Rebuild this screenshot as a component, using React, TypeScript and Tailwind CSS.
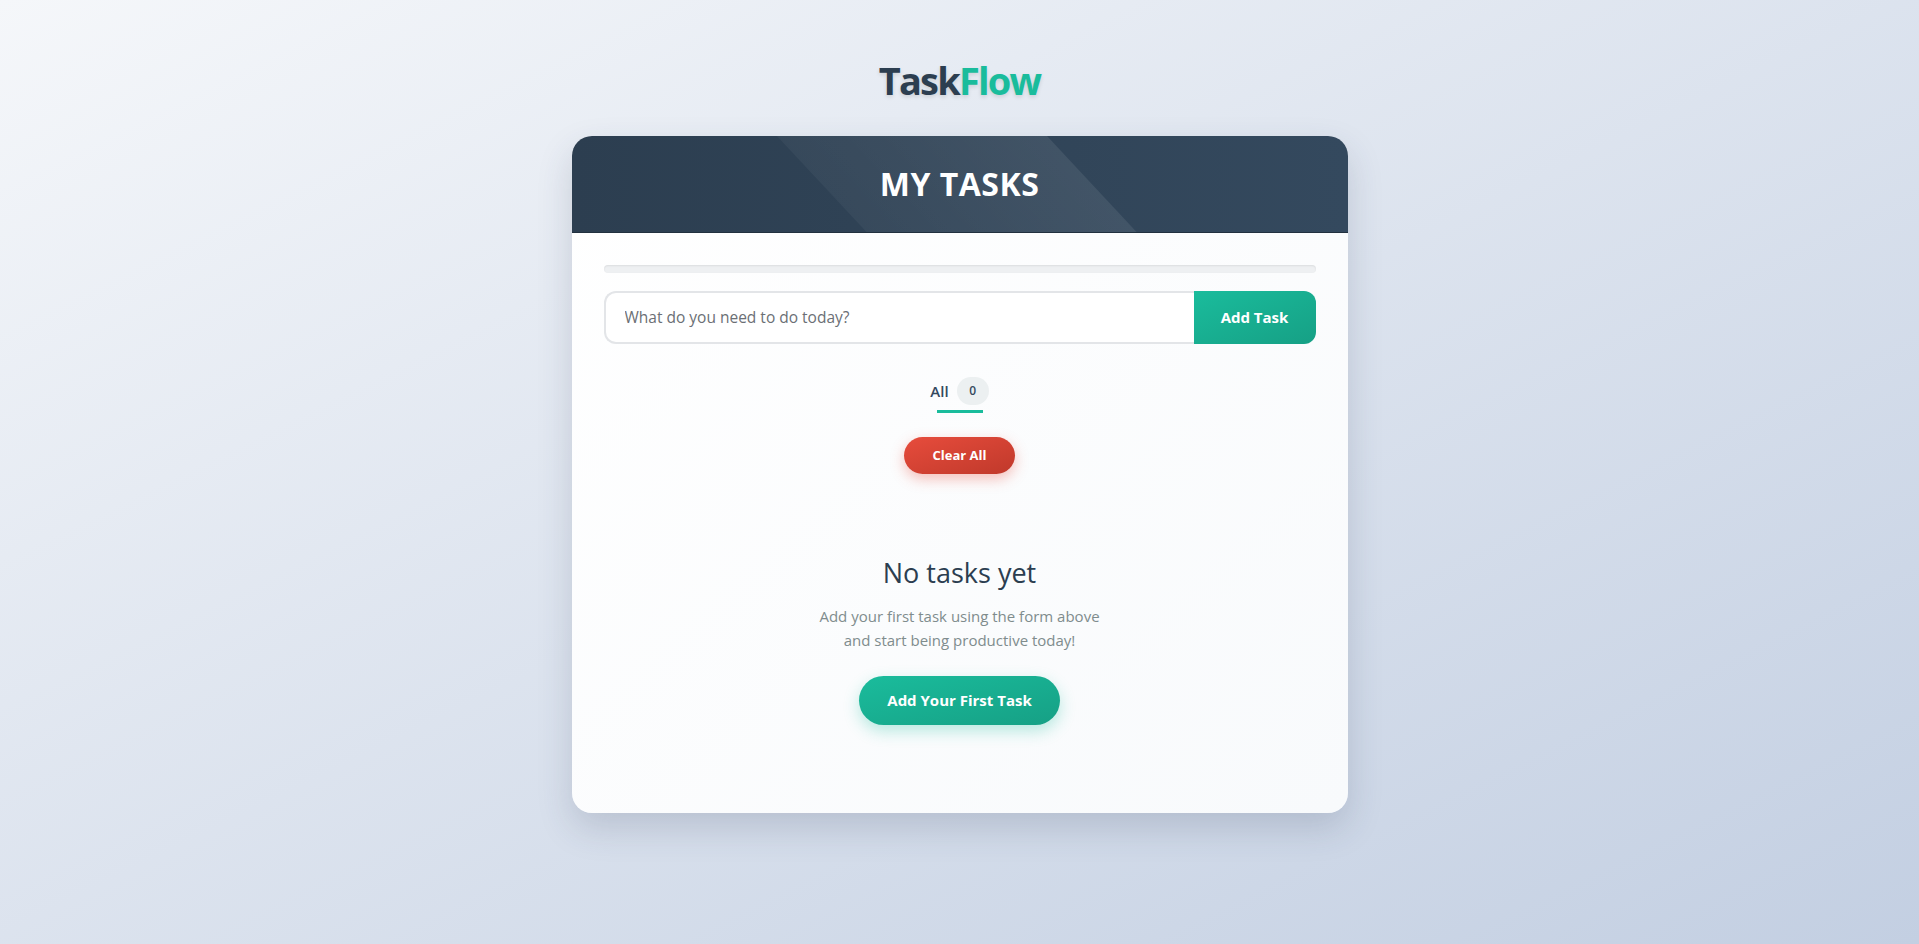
import { useState } from "react";

const font = { fontFamily: '"Open Sans", "Noto Sans", sans-serif' };

function Header() {
  return (
    <div className="relative h-[97px] overflow-hidden border-b border-[#22313f] bg-gradient-to-r from-[#2c3e50] to-[#34495e]">
      {/* diagonal light band */}
      <div className="absolute top-0 left-[205px] h-full w-[270px] skew-x-[43deg] origin-top bg-gradient-to-r from-white/[0.04] to-white/[0.08]" />
      <h2 className="relative flex h-full items-center justify-center text-[32px] font-bold tracking-[0.5px] text-white">
        MY TASKS
      </h2>
    </div>
  );
}

export default function App() {
  const [text, setText] = useState("");
  const [tasks, setTasks] = useState<string[]>([]);

  const add = () => {
    if (!text.trim()) return;
    setTasks([...tasks, text.trim()]);
    setText("");
  };

  return (
    <div
      className="min-h-screen bg-gradient-to-br from-[#f5f7fa] to-[#c3cfe2] pt-[52px] pb-16"
      style={font}
    >
      <h1 className="text-center text-[38px] font-bold leading-[56px] tracking-[-1.8px] text-[#2c3e50] [text-shadow:0_2px_4px_rgba(0,0,0,0.12)]">
        Task<span className="text-[#1abc9c]">Flow</span>
      </h1>

      <div className="mx-auto mt-[28px] w-[776px] overflow-hidden rounded-[20px] bg-gradient-to-br from-white to-[#f8fafc] shadow-[0_15px_35px_rgba(50,60,90,0.18)]">
        <Header />

        <div className="px-8 pt-8 pb-[88px]">
          <div className="h-2 rounded-full bg-[#eef0f2] shadow-[inset_0_1px_2px_rgba(0,0,0,0.08)]" />

          <div className="mt-[18px] flex h-[53px]">
            <input
              value={text}
              onChange={(e) => setText(e.target.value)}
              onKeyDown={(e) => e.key === "Enter" && add()}
              placeholder="What do you need to do today?"
              className="flex-1 rounded-l-[12px] border-2 border-r-0 border-[#e3e5e8] bg-white px-[19px] text-[15.5px] text-[#2c3e50] outline-none placeholder:text-[#6b6f75]"
            />
            <button
              onClick={add}
              className="w-[122px] rounded-r-[12px] bg-gradient-to-br from-[#1abc9c] to-[#16a085] text-[15px] font-bold text-white"
            >
              Add Task
            </button>
          </div>

          <div className="mt-[33px] flex justify-center">
            <div className="flex flex-col items-center">
              <div className="flex items-center gap-[8px]">
                <span className="text-[15px] font-semibold text-[#34495e]">All</span>
                <span className="flex h-[28px] w-[32px] items-center justify-center rounded-full bg-[#ecf0f1] text-[12px] font-semibold text-[#34495e]">
                  {tasks.length}
                </span>
              </div>
              <div className="mt-[5px] h-[3px] w-[46px] bg-[#1abc9c]" />
            </div>
          </div>

          <div className="mt-[24px] flex justify-center">
            <button
              onClick={() => setTasks([])}
              className="h-[37px] w-[111px] rounded-full bg-gradient-to-br from-[#e74c3c] to-[#c0392b] text-[13px] font-bold text-white shadow-[0_5px_14px_rgba(231,76,60,0.35)]"
            >
              Clear All
            </button>
          </div>

          <div className="mt-[80px] flex flex-col items-center text-center">
            <h3 className="text-[27px] font-medium leading-[38px] text-[#2c3e50]">No tasks yet</h3>
            <p className="mt-[12px] text-[15px] leading-[24px] text-[#7f8c8d]">
              Add your first task using the form above
              <br />
              and start being productive today!
            </p>
            <button className="mt-[24px] h-[49px] w-[201px] rounded-full bg-gradient-to-br from-[#1abc9c] to-[#16a085] text-[15px] font-bold text-white shadow-[0_6px_16px_rgba(26,188,156,0.3)]">
              Add Your First Task
            </button>
          </div>
        </div>
      </div>
    </div>
  );
}
